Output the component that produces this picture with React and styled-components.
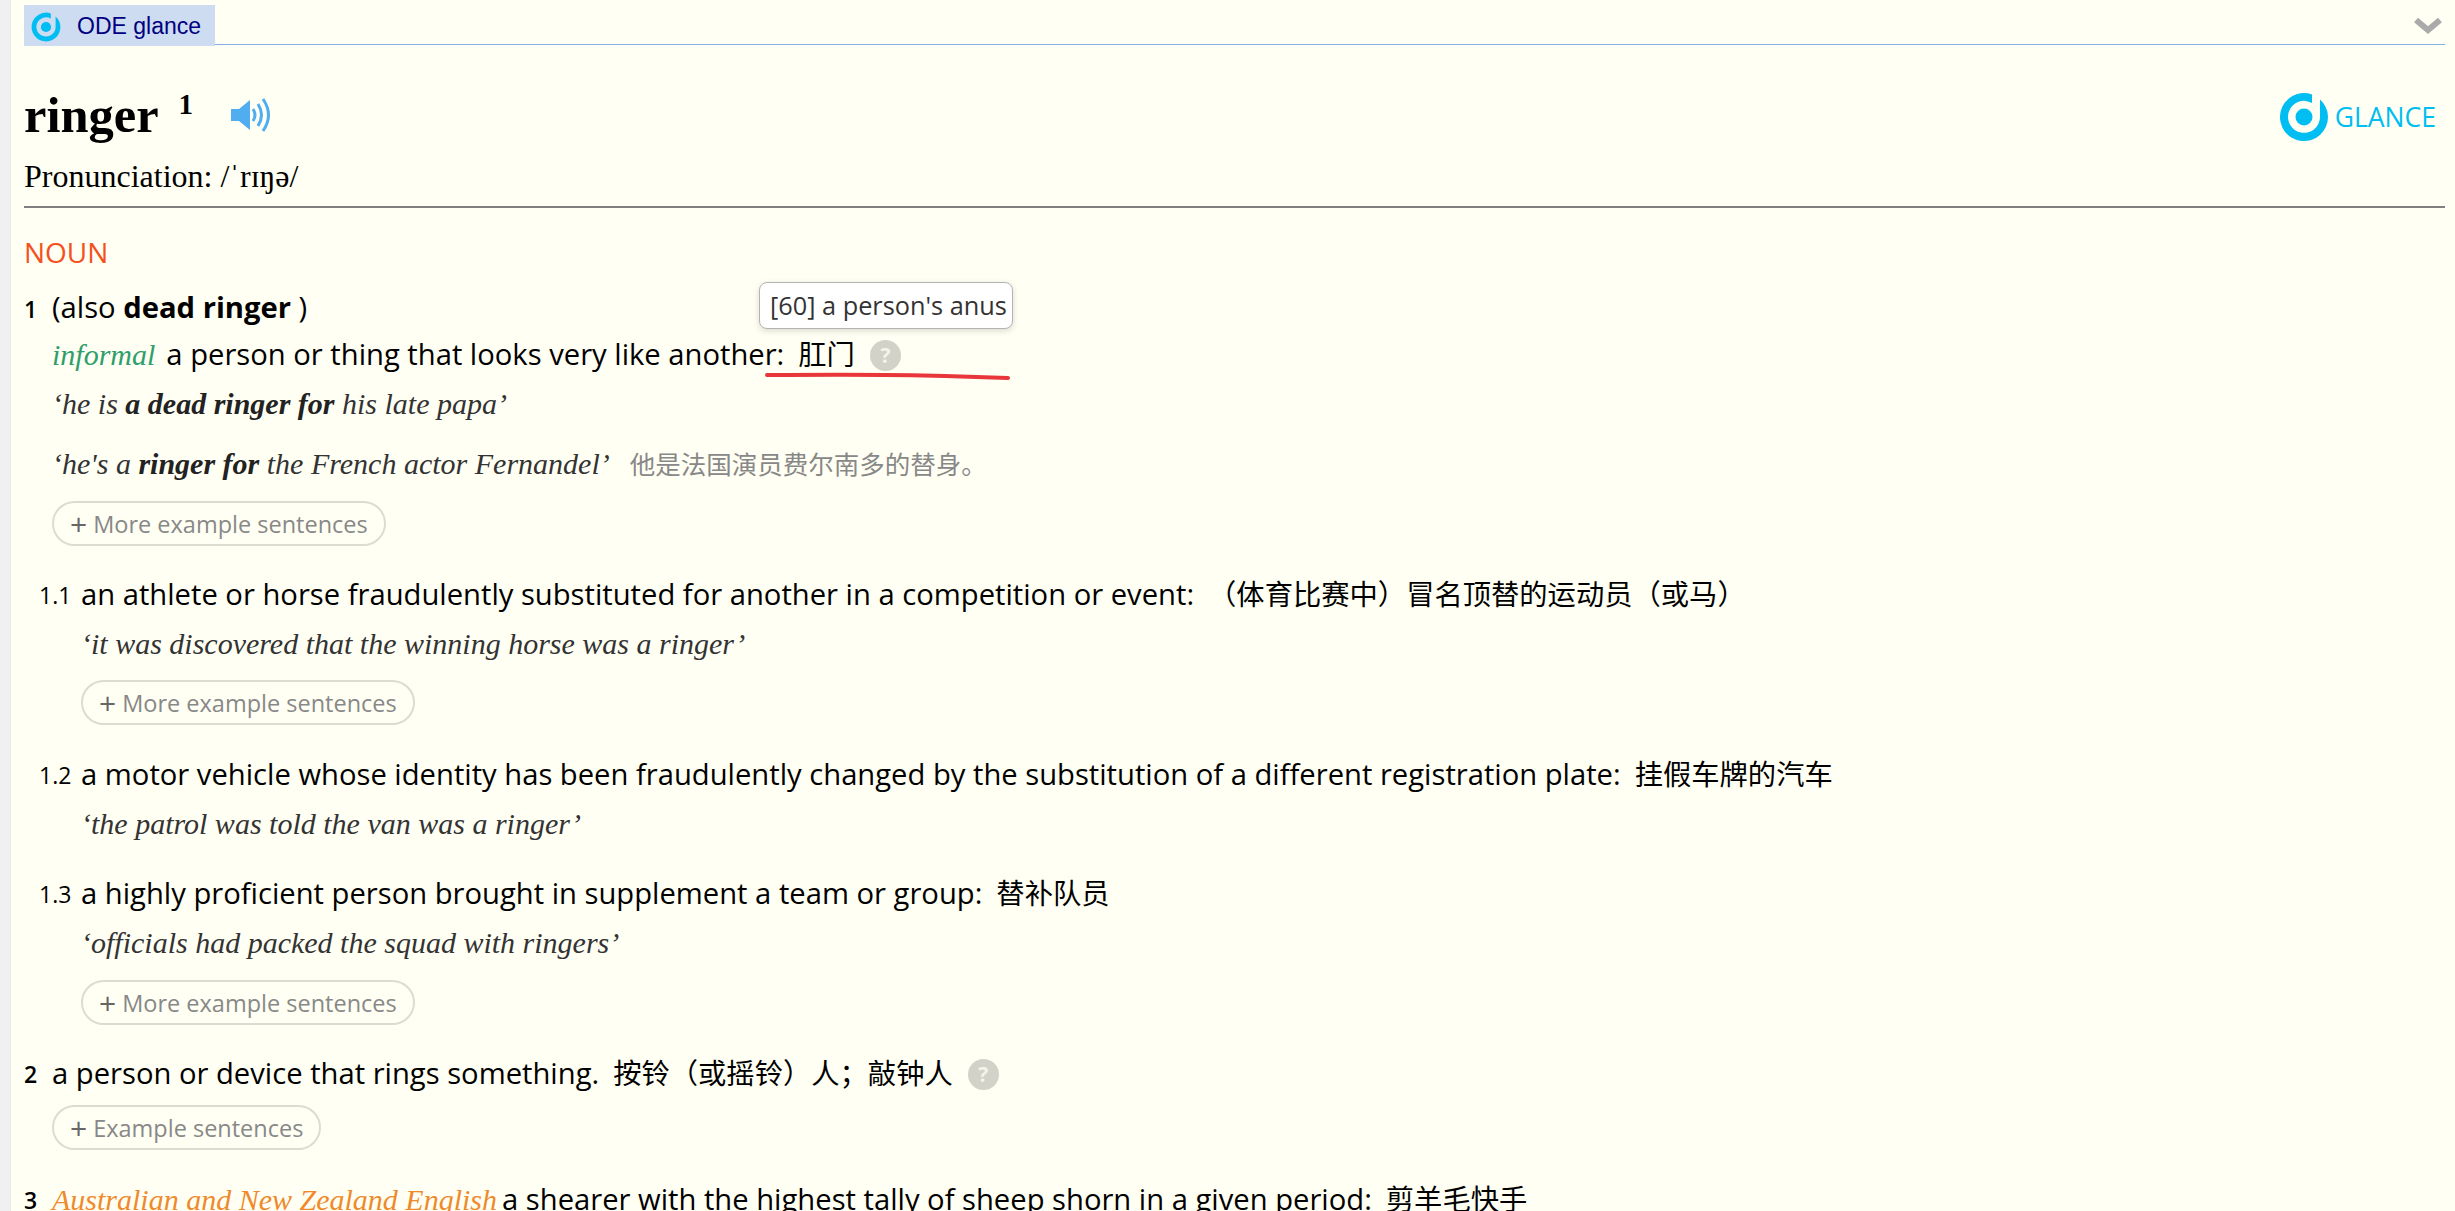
import React from 'react';
import styled, { createGlobalStyle } from 'styled-components';

const GlobalStyle = createGlobalStyle`
  html, body {
    margin: 0;
    padding: 0;
    height: 100%;
    overflow: hidden;
    background: #f0f0f0;
  }
`;

const LogoMark = ({ size }) => (
  <svg width={size} height={size} viewBox="0 0 50 50">
    <path
      d="M33 2.4 A24 24 0 1 0 49 25 A24 24 0 0 0 41 7.5 L41 25 A16 16 0 1 1 33 11 Z"
      fill="#00bdf2"
    />
    <circle cx="25" cy="25" r="8.5" fill="#00bdf2" />
  </svg>
);

const Speaker = () => (
  <svg width="42" height="36" viewBox="0 0 42 36">
    <path d="M1 12 H9 L20 3 V33 L9 24 H1 Z" fill="#4fadf0" />
    <g fill="none" stroke="#4fadf0" strokeWidth="3">
      <path d="M23 12 Q27 18 23 24" />
      <path d="M28 7 Q35 18 28 29" />
      <path d="M33 2 Q44 18 33 34" />
    </g>
  </svg>
);

const Page = styled.div`
  margin-left: 10px;
  height: 1211px;
  overflow: hidden;
  background: #fffff3;
  padding: 5px 10px 0 13px;
  box-sizing: border-box;
  border-left: 1px solid #eaeaea;
  font-family: "Open Sans", sans-serif;
  color: #000;
  position: relative;
`;

const TabBar = styled.div`
  display: flex;
  justify-content: space-between;
  height: 39px;
  border-bottom: 1px solid #86aee6;
`;

const Tab = styled.div`
  display: flex;
  align-items: center;
  gap: 16px;
  width: 191px;
  height: 41px;
  box-sizing: border-box;
  padding: 2px 0 0 7px;
  background: #cddcf0;
  color: #000080;
  font: 23px "Liberation Sans", sans-serif;
  white-space: nowrap;
`;

const Collapse = styled.svg`
  width: 28px;
  height: 18px;
  margin: 12px 3px 0 0;
`;

const Header = styled.div`
  display: flex;
  justify-content: space-between;
  align-items: flex-start;
  height: 163px;
  border-bottom: 2px solid #808080;
  box-sizing: border-box;
`;

const HeadLeft = styled.div`
  padding: 45px 0 0 0;
`;

const Headword = styled.div`
  display: flex;
  align-items: center;
  height: 50px;
`;

const Word = styled.span`
  font: bold 50.5px "Liberation Serif", serif;
`;

const Homograph = styled.sup`
  font: bold 29px "Liberation Serif", serif;
  margin: 0 37px 0 20px;
  position: relative;
  top: -11px;
`;

const Pronunciation = styled.div`
  font: 32px/34px "Liberation Serif", "DejaVu Serif", serif;
  margin-top: 19px;
`;

const GlanceBrand = styled.div`
  display: flex;
  align-items: center;
  gap: 6px;
  margin: 47px 9px 0 0;
  color: #00bdf2;
  font: 26.5px "Open Sans", sans-serif;
`;

const Pos = styled.div`
  color: #f4511e;
  font-size: 28px;
  line-height: 32px;
  margin-top: 28px;
`;

const Sense = styled.div`
  display: flex;
  position: relative;
  margin-top: ${p => p.$top || 0}px;
  padding-left: ${p => (p.$sub ? 15 : 0)}px;
`;

const SenseNumber = styled.span`
  flex: none;
  width: ${p => (p.$sub ? 42 : 28)}px;
  padding-top: 2px;
  font-size: 23px;
  line-height: 36px;
  font-weight: ${p => (p.$sub ? 400 : 600)};
`;

const SenseBody = styled.div`
  flex: 1;
`;

const Line = styled.div`
  font-size: 29.2px;
  line-height: 36px;
  height: 36px;
  white-space: nowrap;
  margin-top: ${p => p.$top || 0}px;
`;

const Zh = styled.span`
  font-family: "Noto Sans CJK SC", sans-serif;
  font-size: 28.3px;
  margin-left: 14px;
`;

const Register = styled.i`
  font-family: "Liberation Serif", serif;
  font-size: 30px;
  color: ${p => p.$color};
  margin-right: ${p => p.$gap}px;
`;

const Example = styled.div`
  font: italic 30px/36px "Liberation Serif", serif;
  color: #333;
  height: 36px;
  white-space: nowrap;
  margin-top: ${p => p.$top || 15}px;
  b {
    color: #222;
  }
`;

const ExampleZh = styled.span`
  font: normal 25.5px "Noto Sans CJK SC", sans-serif;
  color: #888;
  margin-left: 20px;
`;

const Pill = styled.div`
  display: inline-flex;
  align-items: center;
  height: 45px;
  box-sizing: border-box;
  padding: 0 16px;
  margin-top: ${p => p.$top || 0}px;
  border: 2px solid #dcdcd2;
  border-radius: 23px;
  color: #888;
  font-size: 23.5px;
  white-space: nowrap;
  span {
    color: #666;
    font-size: 30px;
    margin-right: 6px;
    line-height: 1;
  }
`;

const Hint = styled.span`
  display: inline-flex;
  align-items: center;
  justify-content: center;
  width: 31px;
  height: 31px;
  margin-left: 15px;
  border-radius: 50%;
  background: #d2d2c8;
  color: #f4f4ea;
  font-size: 21px;
  font-weight: 700;
  vertical-align: 2px;
`;

const Tooltip = styled.div`
  position: absolute;
  left: 748px;
  top: 282px;
  width: 254px;
  height: 47px;
  box-sizing: border-box;
  padding-left: 10px;
  border: 1px solid #b4b4b4;
  border-radius: 8px;
  background: #fff;
  box-shadow: 0 2px 6px rgba(0, 0, 0, 0.15);
  color: #333;
  font-size: 25.3px;
  line-height: 45px;
  white-space: nowrap;
`;

const RedLine = styled.svg`
  position: absolute;
  left: 754px;
  top: 371px;
  width: 245px;
  height: 10px;
`;

const More = ({ top, children }) => (
  <Pill $top={top}><span>+</span>{children}</Pill>
);

export default function App() {
  return (
    <>
      <GlobalStyle />
      <Page>
        <TabBar>
          <Tab><LogoMark size={30} />ODE glance</Tab>
          <Collapse viewBox="0 0 28 18">
            <path d="M2 3 L14 13 L26 3" fill="none" stroke="#aaa" strokeWidth="6" />
          </Collapse>
        </TabBar>

        <Header>
          <HeadLeft>
            <Headword>
              <Word>ringer</Word>
              <Homograph>1</Homograph>
              <Speaker />
            </Headword>
            <Pronunciation>Pronunciation: /ˈrɪŋə/</Pronunciation>
          </HeadLeft>
          <GlanceBrand><LogoMark size={50} />GLANCE</GlanceBrand>
        </Header>

        <Pos>NOUN</Pos>

        <Sense $top={21}>
          <SenseNumber>1</SenseNumber>
          <SenseBody>
            <Line>(also <b>dead ringer</b> )</Line>
            <Line $top={10}>
              <Register $color="#2e9e6b" $gap={11}>informal</Register>
              a person or thing that looks very like another:
              <Zh>肛门</Zh>
              <Hint>?</Hint>
            </Line>
            <Example>‘he is <b>a dead ringer for</b> his late papa’</Example>
            <Example $top={22}>
              ‘he's a <b>ringer for</b> the French actor Fernandel’
              <ExampleZh>他是法国演员费尔南多的替身。</ExampleZh>
            </Example>
            <More top={21}>More example sentences</More>
          </SenseBody>
        </Sense>

        <Sense $sub $top={29}>
          <SenseNumber $sub>1.1</SenseNumber>
          <SenseBody>
            <Line>
              an athlete or horse fraudulently substituted for another in a competition or event:
              <Zh>（体育比赛中）冒名顶替的运动员（或马）</Zh>
            </Line>
            <Example>‘it was discovered that the winning horse was a ringer’</Example>
            <More top={18}>More example sentences</More>
          </SenseBody>
        </Sense>

        <Sense $sub $top={30}>
          <SenseNumber $sub>1.2</SenseNumber>
          <SenseBody>
            <Line>
              a motor vehicle whose identity has been fraudulently changed by the substitution of a different registration plate:
              <Zh>挂假车牌的汽车</Zh>
            </Line>
            <Example>‘the patrol was told the van was a ringer’</Example>
          </SenseBody>
        </Sense>

        <Sense $sub $top={32}>
          <SenseNumber $sub>1.3</SenseNumber>
          <SenseBody>
            <Line>
              a highly proficient person brought in supplement a team or group:
              <Zh>替补队员</Zh>
            </Line>
            <Example>‘officials had packed the squad with ringers’</Example>
            <More top={19}>More example sentences</More>
          </SenseBody>
        </Sense>

        <Sense $top={29}>
          <SenseNumber>2</SenseNumber>
          <SenseBody>
            <Line>
              a person or device that rings something.
              <Zh>按铃（或摇铃）人；敲钟人</Zh>
              <Hint>?</Hint>
            </Line>
            <More top={15}>Example sentences</More>
          </SenseBody>
        </Sense>

        <Sense $top={30}>
          <SenseNumber>3</SenseNumber>
          <SenseBody>
            <Line>
              <Register $color="#ef8a2c" $gap={5}>Australian and New Zealand English</Register>
              a shearer with the highest tally of sheep shorn in a given period:
              <Zh>剪羊毛快手</Zh>
            </Line>
          </SenseBody>
        </Sense>

        <Tooltip>[60] a person's anus</Tooltip>
        <RedLine viewBox="0 0 245 10">
          <path d="M2 4 Q120 3 180 5 T243 7" fill="none" stroke="#e8363a" strokeWidth="4" strokeLinecap="round" />
        </RedLine>
      </Page>
    </>
  );
}
